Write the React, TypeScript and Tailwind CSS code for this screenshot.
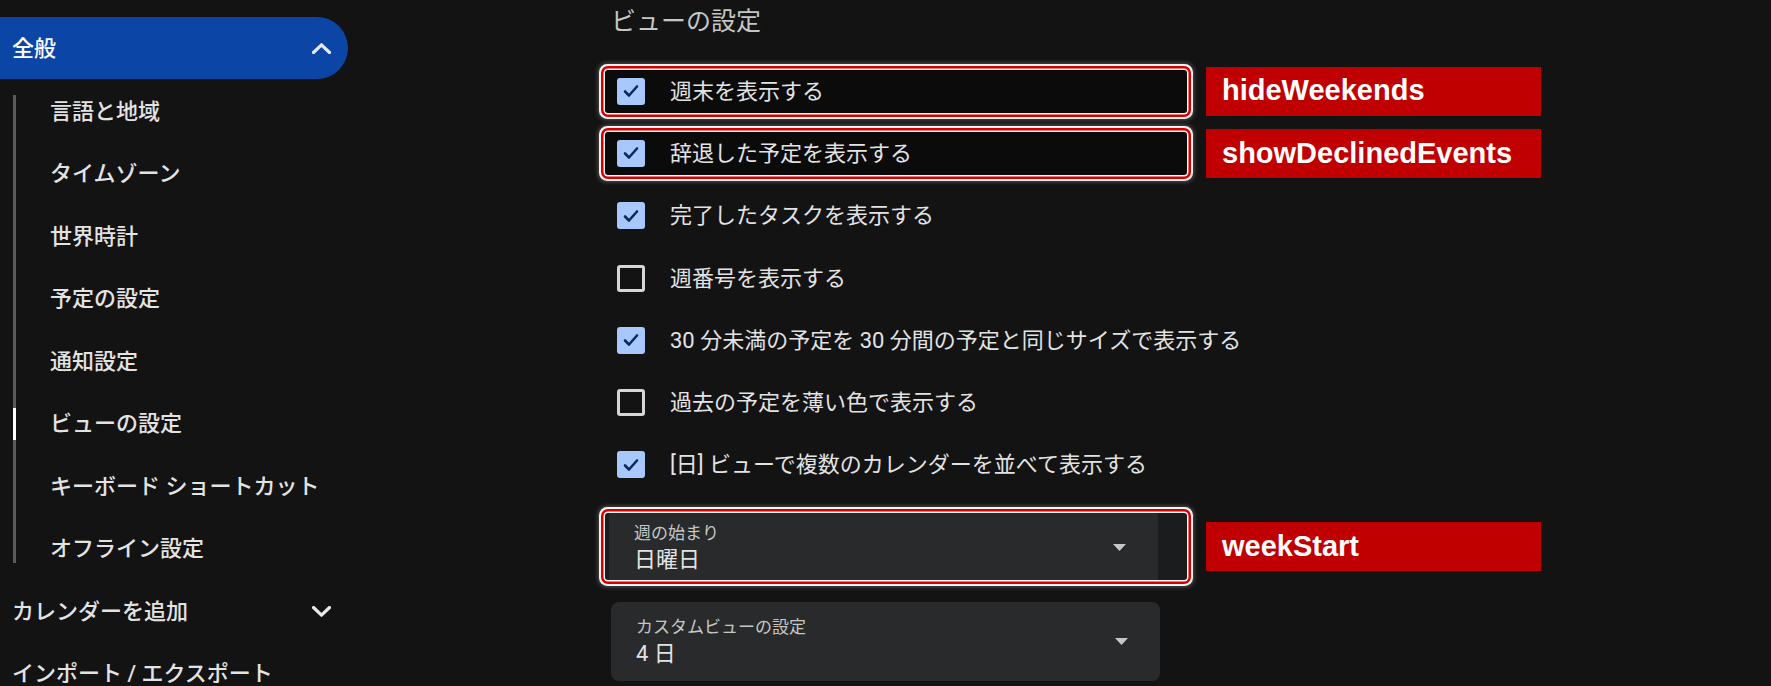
import React from "react"

// sidebar sub items under 全般
const subItems = [
  "言語と地域",
  "タイムゾーン",
  "世界時計",
  "予定の設定",
  "通知設定",
  "ビューの設定",
  "キーボード ショートカット",
  "オフライン設定",
]

const viewOptions = [
  { label: "週末を表示する", checked: true, tag: "hideWeekends" },
  { label: "辞退した予定を表示する", checked: true, tag: "showDeclinedEvents" },
  { label: "完了したタスクを表示する", checked: true },
  { label: "週番号を表示する", checked: false },
  { label: "30 分未満の予定を 30 分間の予定と同じサイズで表示する", checked: true },
  { label: "過去の予定を薄い色で表示する", checked: false },
  { label: "[日] ビューで複数のカレンダーを並べて表示する", checked: true },
]

function Chevron({ up }: { up?: boolean }) {
  return (
    <svg width="19" height="11" viewBox="0 0 19 11" fill="none">
      <path
        d={up ? "M1.5 9.5L9.5 1.8L17.5 9.5" : "M1.5 1.5L9.5 9.2L17.5 1.5"}
        stroke="#e8e8e8"
        strokeWidth="3.2"
        strokeLinecap="round"
        strokeLinejoin="round"
      />
    </svg>
  )
}

function Checkbox({ checked }: { checked: boolean }) {
  if (!checked) {
    return <div className="w-[28px] h-[27px] shrink-0 rounded-[3px] border-[3px] border-[#d6d6d6]" />
  }
  return (
    <div className="w-[28px] h-[27px] shrink-0 rounded-[3px] bg-[#a8c7fa] flex items-center justify-center">
      <svg width="20" height="20" viewBox="0 0 20 20" fill="none">
        <path d="M4 10.5L8 14.5L16 5.5" stroke="#0b2a5c" strokeWidth="2.6" strokeLinecap="round" strokeLinejoin="round" />
      </svg>
    </div>
  )
}

function Tag({ text }: { text: string }) {
  return (
    <div className="ml-[19px] w-[335px] h-[49px] shrink-0 bg-[#c00000] flex items-center pl-[16px] font-['Liberation_Sans',Arial,sans-serif] font-bold text-[29px] text-white">
      {text}
    </div>
  )
}

const ring = "shadow-[0_0_0_1.5px_#f4f4f4,0_0_0_4px_#d50000,0_0_0_6px_#f2f2f2,0_0_4px_7px_rgba(255,255,255,0.25)]"

function Select({ label, value }: { label: string; value: string }) {
  return (
    <div className="w-[549px] h-[79px] shrink-0 rounded-[8px] bg-[#282a2c] flex items-center justify-between pl-[25px] pr-[32px]">
      <div className="flex flex-col">
        <span className="text-[17px] leading-[24px] text-[#c4c7c5]">{label}</span>
        <span className="text-[22px] leading-[30px] text-[#e3e3e3]">{value}</span>
      </div>
      <svg width="13" height="7" viewBox="0 0 13 7">
        <path d="M0 0H13L6.5 7Z" fill="#c4c7c5" />
      </svg>
    </div>
  )
}

export default function App() {
  return (
    <div className="w-[1771px] h-[686px] overflow-hidden bg-[#131313] flex font-['Roboto','Noto_Sans_CJK_JP',sans-serif]">
      {/* Sidebar */}
      <div className="w-[348px] shrink-0 pt-[17px] flex flex-col">
        <div className="h-[62px] shrink-0 rounded-r-full bg-[#0b45a5] flex items-center justify-between pl-[12px] pr-[17px]">
          <span className="text-[22px] font-medium text-white">全般</span>
          <Chevron up />
        </div>

        <div className="shrink-0 ml-[13px] mt-[16px] mb-[17px] border-l-[3px] border-[#5a5a5a]">
          <div className="-mt-[15px] -mb-[17px]">
            {subItems.map((item) => (
              <div key={item} className="relative h-[62.5px] flex items-center pl-[34px] text-[22px] font-medium text-[#e3e3e3]">
                {item === "ビューの設定" && <div className="absolute -left-[3px] top-[15px] w-[3px] h-[32px] bg-white" />}
                {item}
              </div>
            ))}
          </div>
        </div>

        <div className="h-[62px] shrink-0 flex items-center justify-between pl-[12px] pr-[17px]">
          <span className="text-[22px] font-medium text-[#e3e3e3]">カレンダーを追加</span>
          <Chevron />
        </div>
        <div className="h-[62px] shrink-0 flex items-center pl-[12px]">
          <span className="text-[22px] font-medium text-[#e3e3e3]">インポート / エクスポート</span>
        </div>
      </div>

      {/* Main */}
      <div className="ml-[257px] pt-[2px] flex flex-col">
        <div className="h-[40px] shrink-0 leading-[40px] pl-[6px] text-[25px] text-[#c4c7c5]">ビューの設定</div>

        <div className="mt-[18px] shrink-0 flex flex-col">
          {viewOptions.map((opt) => (
            <div key={opt.label} className="h-[62.3px] shrink-0 flex items-center">
              <div
                className={
                  opt.tag
                    ? `w-[582px] h-[43px] rounded-[3px] bg-[#0b0b0b] flex items-center pl-[12px] ${ring}`
                    : "w-[582px] h-[43px] flex items-center pl-[12px]"
                }
              >
                <Checkbox checked={opt.checked} />
                <span className="ml-[25px] text-[22px] text-[#e3e3e3] whitespace-nowrap">{opt.label}</span>
              </div>
              {opt.tag && <Tag text={opt.tag} />}
            </div>
          ))}
        </div>

        <div className="mt-[17px] shrink-0 flex items-center">
          <div className={`w-[582px] h-[67px] shrink-0 rounded-[3px] overflow-hidden bg-[#1b1c1d] ${ring}`}>
            <div className="-mt-[5px] ml-[4px]">
              <Select label="週の始まり" value="日曜日" />
            </div>
          </div>
          <Tag text="weekStart" />
        </div>

        <div className="mt-[22px] ml-[6px] shrink-0">
          <Select label="カスタムビューの設定" value="4 日" />
        </div>
      </div>
    </div>
  )
}
